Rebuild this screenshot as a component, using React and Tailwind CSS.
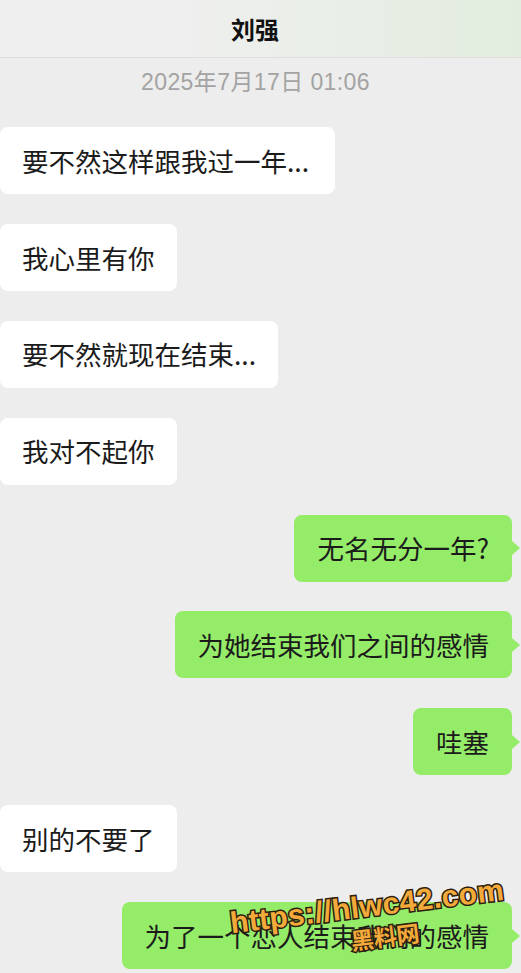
import React from "react";

const cjk = { fontFamily: '"Noto Sans CJK SC", "Noto Sans", sans-serif' };

const messages = [
  { side: "left", text: "要不然这样跟我过一年...", extra: true },
  { side: "left", text: "我心里有你" },
  { side: "left", text: "要不然就现在结束..." },
  { side: "left", text: "我对不起你" },
  { side: "right", text: "无名无分一年?" },
  { side: "right", text: "为她结束我们之间的感情" },
  { side: "right", text: "哇塞" },
  { side: "left", text: "别的不要了" },
  { side: "right", text: "为了一个恋人结束我们的感情" },
];

function Bubble({ side, text, extra }) {
  if (side === "left") {
    return (
      <div className="flex justify-start">
        <div
          className={
            extra
              ? "h-[67px] flex items-center bg-white rounded-[8px] pl-[22px] pr-[26px] text-[26.5px] text-[#1b1b1b] whitespace-nowrap"
              : "h-[67px] flex items-center bg-white rounded-[8px] pl-[22px] pr-[22px] text-[26.5px] text-[#1b1b1b] whitespace-nowrap"
          }
          style={cjk}
        >
          {text}
        </div>
      </div>
    );
  }
  return (
    <div className="flex justify-end pr-[9px]">
      <div className="relative h-[67px] flex items-center bg-[#95ec69] rounded-[8px] pl-[23px] pr-[23px] text-[26.5px] text-[#1b1b1b] whitespace-nowrap" style={cjk}>
        {text}
        <span className="absolute right-[-8px] top-1/2 -translate-y-1/2 w-0 h-0 border-y-[7px] border-y-transparent border-l-[8px] border-l-[#95ec69]" />
      </div>
    </div>
  );
}

export default function App() {
  return (
    <div className="relative w-[521px] h-[973px] overflow-hidden bg-[#ededed]">
      <div className="h-[58px] flex items-center justify-center pr-[11px] border-b border-[#dedede] bg-gradient-to-r from-[#efefef] from-30% to-[#e3eddf]">
        <span className="text-[24px] font-semibold text-[#111]" style={cjk}>刘强</span>
      </div>
      <div className="h-[48px] flex items-center justify-center pr-[10px]">
        <span className="text-[23px] tracking-[0.4px] text-[#a3a3a3]" style={{ fontFamily: '"Liberation Sans", "Noto Sans CJK SC", sans-serif' }}>
          2025年7月17日 01:06
        </span>
      </div>
      <div className="mt-[21px] flex flex-col gap-[29.9px]">
        {messages.map((m, i) => (
          <Bubble key={i} side={m.side} text={m.text} extra={m.extra} />
        ))}
      </div>

      <div
        className="absolute left-[367px] top-[906px] -translate-x-1/2 -translate-y-1/2 rotate-[-7deg] whitespace-nowrap text-[30px] font-bold text-[#f4aa3a] [-webkit-text-stroke:3px_#2a2010] [paint-order:stroke_fill] tracking-[0.3px]"
        style={{ fontFamily: '"Liberation Sans", Arial, sans-serif' }}
      >
        https://hlwc42.com
      </div>
      <div
        className="absolute left-[385px] top-[936px] -translate-x-1/2 -translate-y-1/2 rotate-[-7deg] whitespace-nowrap text-[23px] font-bold text-[#f4aa3a] [-webkit-text-stroke:3px_#2a2010] [paint-order:stroke_fill]"
        style={cjk}
      >
        黑料网
      </div>
    </div>
  );
}
